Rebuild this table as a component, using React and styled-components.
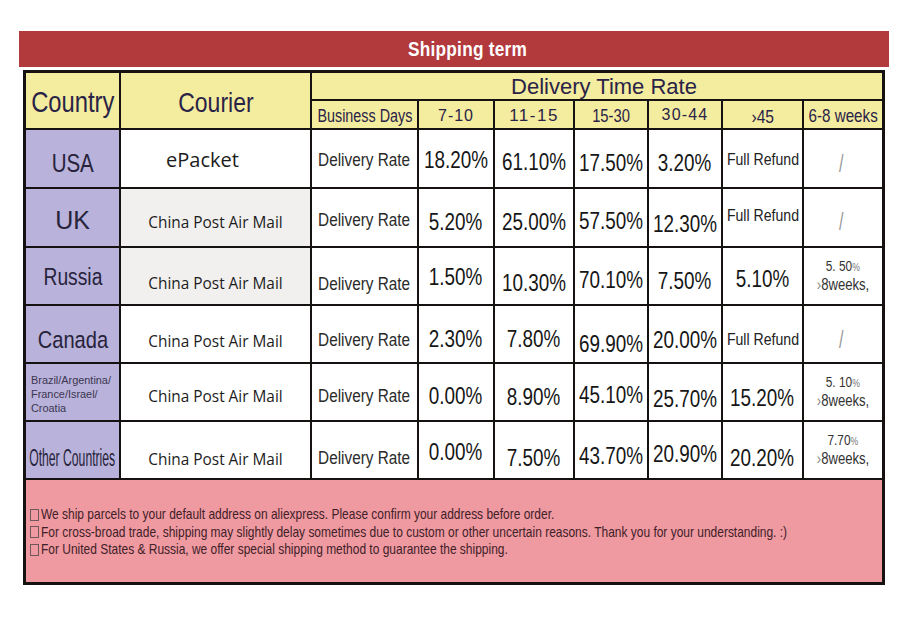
import React from 'react';
import styled, { createGlobalStyle } from 'styled-components';

const ARIAL = '"Liberation Sans", Arial, sans-serif';
const OPEN = '"Open Sans", "Noto Sans", sans-serif';

const Global = createGlobalStyle`
  html, body { margin: 0; padding: 0; background: #fff; }
  body { font-family: ${ARIAL}; }
`;

const Page = styled.div`
  width: 900px;
  height: 641px;
  box-sizing: border-box;
  padding: 31px 0 0 19px;
  overflow: hidden;
`;

const Sheet = styled.div`
  width: 870px;
  display: flex;
  flex-direction: column;
`;

/* Arial-narrow look: Liberation Sans squeezed horizontally */
const Narrow = styled.span`
  display: inline-block;
  white-space: nowrap;
  font-family: ${ARIAL};
  transform: scaleX(${(p) => p.$sx || 0.82});
  transform-origin: ${(p) => p.$origin || 'center'};
`;

const TitleBar = styled.div`
  height: 36px;
  background: #b23a3c;
  color: #fff;
  display: flex;
  align-items: center;
  justify-content: center;
  padding-left: 28px;
  font-weight: 700;
  font-size: 21px;
  letter-spacing: 0.3px;
`;

const Table = styled.div`
  margin: 3px 4px 0;
  border: 3px solid #161212;
  background: #161212;
  display: grid;
  grid-template-columns: 93px 189px 105px 74px 78px 72px 72px 79px 78px;
  grid-template-rows: 26px 27px 57px 57px 56px 56px 56px 56px 102px;
  gap: 2px;
`;

const Base = styled.div`
  display: flex;
  align-items: center;
  justify-content: center;
  box-sizing: border-box;
  min-width: 0;
  line-height: 1;
  white-space: nowrap;
  padding-top: ${(p) => Math.max(0, (p.$dy || 0) * 2)}px;
  padding-bottom: ${(p) => Math.max(0, -(p.$dy || 0) * 2)}px;
`;

const HeadCell = styled(Base)`
  background: #f4ec9e;
  color: #2a2348;
  grid-column: ${(p) => p.$col || 'auto'};
  grid-row: ${(p) => p.$row || 'auto'};
  font-size: ${(p) => p.$size}px;
  letter-spacing: ${(p) => p.$ls || 0}px;
  padding-left: ${(p) => p.$shift || 0}px;
`;

const CountryCell = styled(Base)`
  background: #b9b2da;
  color: #27233b;
  font-size: ${(p) => p.$size}px;
`;

const SmallCountries = styled(Base)`
  background: #b9b2da;
  color: #3b3650;
  flex-direction: column;
  align-items: flex-start;
  justify-content: center;
  padding-left: 5px;
  font-size: 11.6px;
  line-height: 14px;
`;

const CourierCell = styled(Base)`
  background: ${(p) => (p.$gray ? '#f1f0ee' : '#fff')};
  color: #1c1c1c;
  font-family: ${OPEN};
  font-size: ${(p) => p.$size || 15.4}px;
  padding-right: ${(p) => p.$shiftLeft || 0}px;
`;

const RateLabel = styled(Base)`
  background: #fff;
  color: #2a2a2a;
  font-size: 18.7px;
`;

const Value = styled(Base)`
  background: #fff;
  color: #161616;
  font-size: 23px;
`;

const Refund = styled(Base)`
  background: #fff;
  color: #222;
  font-size: 17.2px;
`;

const Slash = styled(Base)`
  background: #fff;
  color: #9a9a9a;
  font-size: 23px;
  padding-right: 4px;
`;

const Weeks = styled(Base)`
  background: #fff;
  color: #333;
  flex-direction: column;
  gap: 4px;
`;

const WeeksTop = styled.span`
  font-size: 14.5px;
`;

const Pct = styled.span`
  font-size: 10.5px;
  color: #777;
`;

const WeeksBottom = styled.span`
  font-size: 16px;
`;

const Angle = styled.span`
  color: #8a8a8a;
`;

const Notes = styled.div`
  grid-column: 1 / -1;
  background: #ef99a1;
  box-sizing: border-box;
  padding: 26px 0 0 4px;
  display: flex;
  flex-direction: column;
  overflow: hidden;
  font-size: 14.6px;
  line-height: 17.5px;
  color: #3f2128;
`;

const NoteLine = styled.div`
  display: flex;
  align-items: center;
  white-space: nowrap;
`;

const Box = styled.span`
  display: inline-block;
  width: 7px;
  height: 10px;
  border: 1px solid #6e585c;
  margin-right: 2px;
  flex: none;
`;

const rows = [
  {
    country: { text: 'USA', size: 25, dy: 5 },
    courier: { text: 'ePacket', size: 20, shiftLeft: 26, dy: 1 },
    rateDy: 2,
    values: [['18.20%', 2], ['61.10%', 4], ['17.50%', 5], ['3.20%', 5]],
    last45: { type: 'refund', dy: 1 },
    weeks: { type: 'slash', dy: 6 },
  },
  {
    country: { text: 'UK', size: 25, sx: 1, dy: 3 },
    courier: { text: 'China Post Air Mail', gray: true, dy: 5 },
    rateDy: 3,
    values: [['5.20%', 5], ['25.00%', 5], ['57.50%', 4], ['12.30%', 7]],
    last45: { type: 'refund', dy: -2 },
    weeks: { type: 'slash', dy: 5 },
  },
  {
    country: { text: 'Russia', size: 23.5, dy: 2 },
    courier: { text: 'China Post Air Mail', gray: true, dy: 8 },
    rateDy: 8,
    values: [['1.50%', 1], ['10.30%', 7], ['70.10%', 4], ['7.50%', 5]],
    last45: { type: 'value', text: '5.10%', dy: 3 },
    weeks: { type: 'weeks', top: '5. 50', dy: 0 },
  },
  {
    country: { text: 'Canada', size: 24.5, dy: 6 },
    courier: { text: 'China Post Air Mail', dy: 8 },
    rateDy: 6,
    values: [['2.30%', 5], ['7.80%', 5], ['69.90%', 10], ['20.00%', 6]],
    last45: { type: 'refund', dy: 6 },
    weeks: { type: 'slash', dy: 6 },
  },
  {
    country: { type: 'small' },
    courier: { text: 'China Post Air Mail', dy: 5 },
    rateDy: 4,
    values: [['0.00%', 4], ['8.90%', 5], ['45.10%', 3], ['25.70%', 7]],
    last45: { type: 'value', text: '15.20%', dy: 6 },
    weeks: { type: 'weeks', top: '5. 10', dy: 0 },
  },
  {
    country: { text: 'Other Countries', size: 23, sx: 0.53, dy: 8 },
    courier: { text: 'China Post Air Mail', dy: 10 },
    rateDy: 8,
    values: [['0.00%', 2], ['7.50%', 8], ['43.70%', 6], ['20.90%', 4]],
    last45: { type: 'value', text: '20.20%', dy: 8 },
    weeks: { type: 'weeks', top: '7.70', dy: 0 },
  },
];

function CountryView({ c }) {
  if (c.type === 'small') {
    return (
      <SmallCountries $dy={2}>
        <Narrow $sx={0.94} $origin="left">Brazil/Argentina/</Narrow>
        <Narrow $sx={0.94} $origin="left">France/Israel/</Narrow>
        <Narrow $sx={0.94} $origin="left">Croatia</Narrow>
      </SmallCountries>
    );
  }
  return (
    <CountryCell $size={c.size} $dy={c.dy}>
      <Narrow $sx={c.sx}>{c.text}</Narrow>
    </CountryCell>
  );
}

function Last45({ v }) {
  if (v.type === 'refund') {
    return (
      <Refund $dy={v.dy}>
        <Narrow>Full Refund</Narrow>
      </Refund>
    );
  }
  return (
    <Value $dy={v.dy}>
      <Narrow>{v.text}</Narrow>
    </Value>
  );
}

function WeeksView({ w }) {
  if (w.type === 'slash') {
    return (
      <Slash $dy={w.dy}>
        <Narrow $sx={0.7}>/</Narrow>
      </Slash>
    );
  }
  return (
    <Weeks $dy={w.dy}>
      <WeeksTop>
        <Narrow>
          {w.top}
          <Pct>%</Pct>
        </Narrow>
      </WeeksTop>
      <WeeksBottom>
        <Narrow>
          <Angle>›</Angle>8weeks,
        </Narrow>
      </WeeksBottom>
    </Weeks>
  );
}

const notes = [
  'We ship parcels to your default address on aliexpress. Please confirm your address before order.',
  'For cross-broad trade, shipping may slightly delay sometimes due to custom or other uncertain reasons. Thank you for your understanding. :)',
  'For United States & Russia, we offer special shipping method to guarantee the shipping.',
];

export default function App() {
  return (
    <>
      <Global />
      <Page>
        <Sheet>
          <TitleBar>
            <Narrow>Shipping term</Narrow>
          </TitleBar>
          <Table>
            <HeadCell $row="1 / 3" $size={29} $dy={2}><Narrow>Country</Narrow></HeadCell>
            <HeadCell $row="1 / 3" $size={28} $dy={2}><Narrow>Courier</Narrow></HeadCell>
            <HeadCell $col="3 / 10" $size={22} $dy={1} $shift={14}>Delivery Time Rate</HeadCell>
            <HeadCell $size={17.5} $dy={2}><Narrow>Business Days</Narrow></HeadCell>
            <HeadCell $size={16} $ls={1} $dy={1}>7-10</HeadCell>
            <HeadCell $size={17} $ls={1.5} $dy={1}>11-15</HeadCell>
            <HeadCell $size={18} $dy={1}><Narrow>15-30</Narrow></HeadCell>
            <HeadCell $size={16} $ls={1.2} $dy={0}>30-44</HeadCell>
            <HeadCell $size={19} $dy={2}><Narrow>›45</Narrow></HeadCell>
            <HeadCell $size={18.5} $dy={2}><Narrow>6-8 weeks</Narrow></HeadCell>
            {rows.map((r, i) => (
              <React.Fragment key={i}>
                <CountryView c={r.country} />
                <CourierCell
                  $gray={r.courier.gray}
                  $size={r.courier.size}
                  $shiftLeft={r.courier.shiftLeft}
                  $dy={r.courier.dy}
                >
                  {r.courier.text}
                </CourierCell>
                <RateLabel $dy={r.rateDy}>
                  <Narrow>Delivery Rate</Narrow>
                </RateLabel>
                {r.values.map(([t, dy], j) => (
                  <Value key={j} $dy={dy}>
                    <Narrow>{t}</Narrow>
                  </Value>
                ))}
                <Last45 v={r.last45} />
                <WeeksView w={r.weeks} />
              </React.Fragment>
            ))}
            <Notes>
              {notes.map((n, i) => (
                <NoteLine key={i}>
                  <Box />
                  <Narrow $origin="left">{n}</Narrow>
                </NoteLine>
              ))}
            </Notes>
          </Table>
        </Sheet>
      </Page>
    </>
  );
}
